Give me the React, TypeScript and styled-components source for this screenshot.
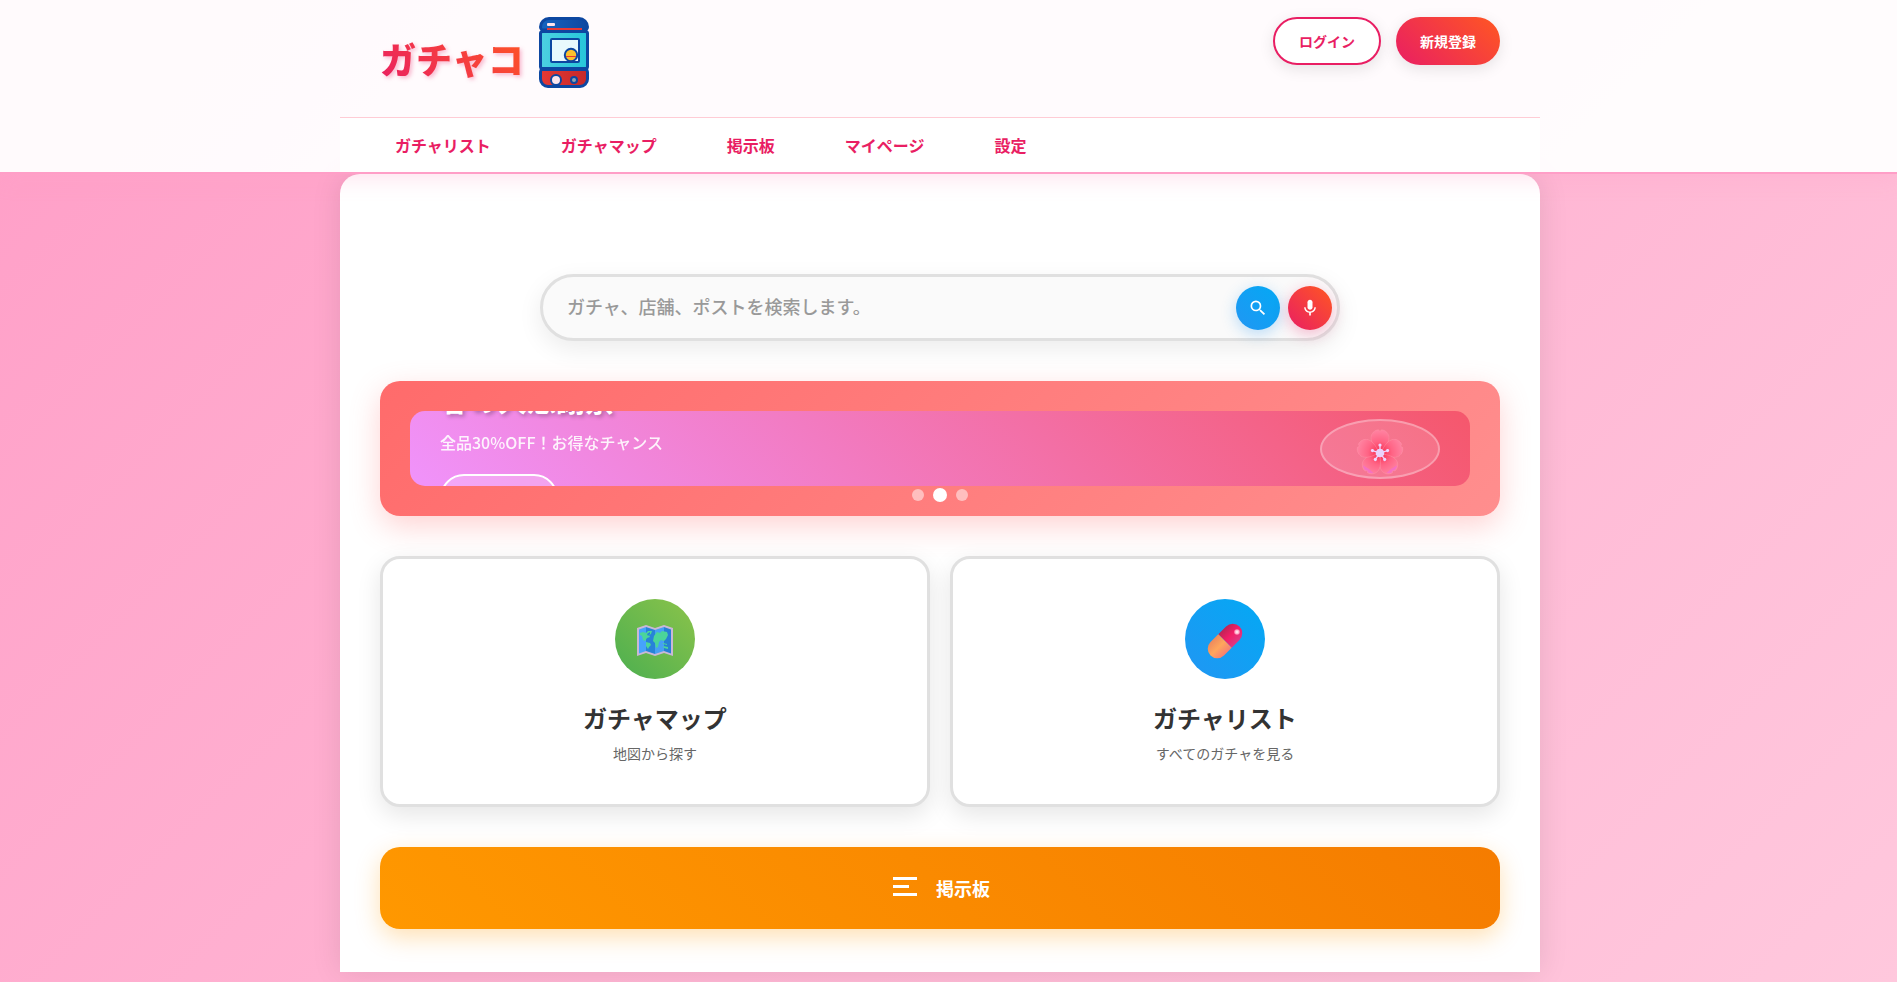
import React from "react";
import styled, { createGlobalStyle, css } from "styled-components";

const Global = createGlobalStyle`
  * { box-sizing: border-box; margin: 0; padding: 0; }
  html { background: linear-gradient(135deg, #ff9ec7 0%, #ffc8dd 100%); }
  body {
    font-family: "Noto Sans CJK JP", sans-serif;
    color: #333;
    line-height: 24px;
  }
  button, input { font-family: inherit; }
`;

const Page = styled.div`
  min-height: 100vh;
  overflow-x: hidden;
  padding-bottom: 10px;
`;

const Header = styled.header`
  position: relative;
  z-index: 2;
  padding-right: 17px;
  background: rgba(255, 255, 255, 0.95);
  border-bottom: 2px solid #ff9ec7;
  box-shadow: 0 4px 20px rgba(255, 158, 199, 0.3);
`;

const HeaderTop = styled.div`
  display: flex;
  justify-content: space-between;
  align-items: flex-start;
  max-width: 1200px;
  height: 117px;
  margin: 0 auto;
  padding: 17px 40px;
`;

const Logo = styled.a`
  display: flex;
  gap: 15px;
  text-decoration: none;
`;

const LogoText = styled.span`
  margin-top: 12px;
  font-size: 36px;
  line-height: 58px;
  font-weight: 900;
  background: linear-gradient(45deg, #e91e63, #ff5722);
  background-clip: text;
  color: transparent;
  filter: drop-shadow(2px 2px 2px rgba(233, 30, 99, 0.3));
`;

const Auth = styled.div`
  display: flex;
  gap: 15px;
`;

const AuthButton = styled.button<{ $filled?: boolean }>`
  height: 48px;
  padding: 0 24px;
  border: ${(p) => (p.$filled ? "0" : "2px solid #e91e63")};
  border-radius: 25px;
  font-size: 14px;
  font-weight: 700;
  color: ${(p) => (p.$filled ? "#fff" : "#e91e63")};
  background: ${(p) => (p.$filled ? "linear-gradient(45deg, #e91e63, #ff5722)" : "#fff")};
  box-shadow: 0 4px 15px rgba(0, 0, 0, 0.1);
`;

const Nav = styled.nav`
  display: flex;
  gap: 20px;
  max-width: 1200px;
  margin: 0 auto;
  padding: 5px 30px;
  background: #fff;
  border-top: 1px solid #ffccd5;
`;

const NavLink = styled.a`
  padding: 10px 25px;
  font-size: 16px;
  line-height: 24px;
  font-weight: 700;
  color: #e91e63;
  text-decoration: none;
`;

const Gutter = styled.div`
  padding-right: 17px;
`;

const Main = styled.main`
  display: flex;
  flex-direction: column;
  max-width: 1200px;
  margin: 0 auto;
  padding: 100px 40px 43px;
  background: #fff;
  border-radius: 20px 20px 0 0;
  box-shadow: 0 0 30px rgba(0, 0, 0, 0.1);
`;

const Search = styled.form`
  display: flex;
  align-items: center;
  gap: 8px;
  width: 100%;
  max-width: 800px;
  height: 67px;
  margin: 0 auto 40px;
  padding: 0 5px 0 24px;
  background: #fafafa;
  border: 3px solid #e0e0e0;
  border-radius: 34px;
  box-shadow: 0 8px 25px rgba(0, 0, 0, 0.08);
`;

const SearchInput = styled.input`
  flex: 1;
  min-width: 0;
  height: 40px;
  padding-bottom: 3px;
  border: 0;
  background: transparent;
  font-size: 18px;
  font-weight: 500;
  color: #333;
  outline: none;
  &::placeholder { color: #999; opacity: 1; }
`;

const RoundButton = styled.button<{ $voice?: boolean }>`
  display: grid;
  place-items: center;
  width: 44px;
  height: 44px;
  border: 0;
  border-radius: 50%;
  ${(p) =>
    p.$voice
      ? css`
          background: linear-gradient(45deg, #e91e63, #ff5722);
          box-shadow: 0 4px 15px rgba(233, 30, 99, 0.3);
        `
      : css`
          background: linear-gradient(45deg, #2196f3, #03a9f4);
          box-shadow: 0 4px 15px rgba(33, 150, 243, 0.3);
        `}
`;

const Carousel = styled.section`
  position: relative;
  height: 135px;
  margin-bottom: 40px;
  padding: 30px;
  border-radius: 20px;
  background: linear-gradient(135deg, #ff6b6b, #ff8e8e);
  box-shadow: 0 10px 30px rgba(255, 107, 107, 0.3);
`;

const Slide = styled.div`
  display: flex;
  align-items: center;
  justify-content: space-between;
  height: 75px;
  padding: 0 30px;
  overflow: hidden;
  border-radius: 15px;
  background: linear-gradient(45deg, #f093fb, #f5576c);
  color: #fff;
`;

const SlideText = styled.div`
  display: flex;
  flex-direction: column;
  align-items: flex-start;
`;

const SlideTitle = styled.h2`
  margin-bottom: 8px;
  font-size: 29px;
  line-height: 46px;
  font-weight: 700;
  text-shadow: 2px 2px 4px rgba(0, 0, 0, 0.3);
`;

const SlideLead = styled.p`
  margin-bottom: 20px;
  font-size: 16px;
  line-height: 24px;
  font-weight: 500;
  opacity: 0.9;
`;

const SlideButton = styled.button`
  height: 48px;
  padding: 0 22px;
  border: 2px solid #fff;
  border-radius: 25px;
  background: rgba(255, 255, 255, 0.2);
  color: #fff;
  font-size: 14px;
  font-weight: 700;
`;

const SlideArt = styled.div`
  display: grid;
  place-items: center;
  width: 120px;
  height: 60px;
  padding-top: 8px;
  border: 2px solid rgba(255, 255, 255, 0.3);
  border-radius: 50%;
  background: rgba(255, 255, 255, 0.15);
`;

const Dots = styled.div`
  position: absolute;
  bottom: 14px;
  left: 0;
  right: 0;
  display: flex;
  justify-content: center;
  align-items: center;
  gap: 9px;
`;

const Dot = styled.button<{ $active?: boolean }>`
  width: ${(p) => (p.$active ? 14 : 12)}px;
  height: ${(p) => (p.$active ? 14 : 12)}px;
  border: 0;
  border-radius: 50%;
  background: ${(p) => (p.$active ? "#fff" : "rgba(255, 255, 255, 0.5)")};
`;

const Cards = styled.div`
  display: grid;
  grid-template-columns: 1fr 1fr;
  gap: 20px;
  margin-bottom: 40px;
`;

const Card = styled.a`
  display: flex;
  flex-direction: column;
  align-items: center;
  height: 251px;
  padding: 40px 27px;
  border: 3px solid #e0e0e0;
  border-radius: 20px;
  background: #fff;
  box-shadow: 0 8px 25px rgba(0, 0, 0, 0.1);
  text-decoration: none;
`;

const CardIcon = styled.div<{ $from: string; $to: string }>`
  display: grid;
  place-items: center;
  width: 80px;
  height: 80px;
  padding-top: 4px;
  margin-bottom: 20px;
  border-radius: 50%;
  background: linear-gradient(45deg, ${(p) => p.$from}, ${(p) => p.$to});
`;

const CardTitle = styled.h3`
  margin-bottom: 5px;
  font-size: 24px;
  line-height: 38px;
  font-weight: 700;
  color: #333;
`;

const CardText = styled.p`
  font-size: 14px;
  line-height: 22px;
  color: #666;
`;

const Board = styled.button`
  display: flex;
  align-items: center;
  justify-content: center;
  gap: 16px;
  height: 82px;
  border: 0;
  border-radius: 20px;
  background: linear-gradient(45deg, #ff9800, #f57c00);
  box-shadow: 0 8px 25px rgba(255, 152, 0, 0.3);
  color: #fff;
  font-size: 18px;
  font-weight: 700;
`;

const GachaMachine = () => (
  <svg width="50" height="71" viewBox="0 0 50 71" aria-hidden="true">
    <defs>
      <linearGradient id="lid"><stop stopColor="#1565c0" /><stop offset="1" stopColor="#0d47a1" /></linearGradient>
      <linearGradient id="tank"><stop stopColor="#4dd0e1" /><stop offset="1" stopColor="#26c6da" /></linearGradient>
      <linearGradient id="base"><stop stopColor="#e53935" /><stop offset="1" stopColor="#c62828" /></linearGradient>
    </defs>
    <path d="M3 13Q1.500 12 1.500 10a8.500 8.500 0 0 1 8.500-8.500h30a8.500 8.500 0 0 1 8.500 8.500Q48.500 12 47 13z" fill="url(#lid)" stroke="#0d47a1" strokeWidth="3" strokeLinejoin="round" />
    <rect x="1.500" y="14.500" width="47" height="37" rx="2" fill="url(#tank)" stroke="#0d47a1" strokeWidth="3" />
    <path d="M3 52.500h44Q48.500 53 48.500 55v7a7.500 7.500 0 0 1-7.500 7.500H9A7.500 7.500 0 0 1 1.500 62v-7Q1.500 53 3 52.500z" fill="url(#base)" stroke="#0d47a1" strokeWidth="3" strokeLinejoin="round" />
    <rect x="8" y="6" width="8" height="3" rx="1" fill="#fce4ec" />
    <rect x="8" y="11" width="35" height="2" fill="#e53935" />
    <rect x="12" y="22" width="28" height="23" rx="1" fill="#e8f9fd" stroke="#0d47a1" strokeWidth="2" />
    <circle cx="32" cy="38" r="6.200" fill="#fbc02d" stroke="#0d47a1" strokeWidth="2" />
    <path d="M27 39.500h10" stroke="#e53935" strokeWidth="1" />
    <circle cx="17" cy="63" r="5" fill="#fce4ec" stroke="#0d47a1" strokeWidth="2" />
    <circle cx="35" cy="63" r="3" fill="#90a4ae" stroke="#0d47a1" strokeWidth="2" />
  </svg>
);

const SearchIcon = () => (
  <svg width="20" height="20" viewBox="0 0 24 24" fill="#fff" aria-hidden="true">
    <path d="M15.500 14h-.79l-.28-.27A6.471 6.471 0 0 0 16 9.500 6.500 6.500 0 1 0 9.500 16c1.610 0 3.090-.59 4.230-1.570l.27.28v.79l5 4.990L20.490 19l-4.990-5zm-6 0C7.010 14 5 11.990 5 9.500S7.010 5 9.500 5 14 7.010 14 9.500 11.990 14 9.500 14z" />
  </svg>
);

const MicIcon = () => (
  <svg width="20" height="20" viewBox="0 0 24 24" fill="#fff" aria-hidden="true">
    <path d="M12 14c1.660 0 3-1.340 3-3V5c0-1.660-1.340-3-3-3S9 3.340 9 5v6c0 1.660 1.340 3 3 3z" />
    <path d="M17.300 11c0 3-2.540 5.100-5.300 5.100S6.700 14 6.700 11H5c0 3.410 2.720 6.230 6 6.720V21h2v-3.280c3.280-.48 6-3.300 6-6.720z" />
  </svg>
);

const Blossom = () => (
  <svg width="48" height="48" viewBox="-24 -24 48 48" aria-hidden="true">
    <defs>
      <radialGradient id="petals" gradientUnits="userSpaceOnUse" cx="0" cy="0" r="24">
        <stop offset=".15" stopColor="#f93a5c" />
        <stop offset=".5" stopColor="#ff6485" />
        <stop offset="1" stopColor="#ff86a4" />
      </radialGradient>
      <linearGradient id="petalGlow" gradientUnits="userSpaceOnUse" x1="0" y1="10" x2="0" y2="23">
        <stop stopColor="#f36bd0" stopOpacity="0" />
        <stop offset="1" stopColor="#f06bd8" stopOpacity=".9" />
      </linearGradient>
    </defs>
    {[0, 72, 144, 216, 288].map((a) => (
      <path
        key={a}
        transform={`rotate(${a})`}
        d="M0-1C-3-4-9-9-9-15.500c0-4 3.500-7.500 7.500-7.800L0-21.500l1.500-1.800c4 .3 7.500 3.800 7.500 7.800C9-9 3-4 0-1z"
        fill="url(#petals)"
        stroke="#ff9aab"
        strokeOpacity=".6"
        strokeWidth=".6"
      />
    ))}
    {[144, 216].map((a) => (
      <g key={a} transform={`rotate(${a})`}>
        <path
          d="M0-1C-3-4-9-9-9-15.500c0-4 3.500-7.500 7.500-7.800L0-21.500l1.500-1.800c4 .3 7.500 3.800 7.500 7.800C9-9 3-4 0-1z"
          fill="url(#petalGlow)"
          fillOpacity=".8"
        />
        <path d="M-6.500-20Q-4-23-1.500-22.800L0-21.500l1.500-1.300Q4-23 6.500-20Q0-19-6.500-20z" fill="#f06bd8" fillOpacity=".6" />
      </g>
    ))}
    {[0, 72, 144, 216, 288].map((a) => (
      <g key={a} transform={`rotate(${a})`}>
        <path d="M0 0v-8" stroke="#f0d5ff" strokeWidth="1.300" />
        <circle cy="-8" r="1.600" fill="#f0d5ff" />
      </g>
    ))}
    <circle r="4.300" fill="#ead2fc" />
  </svg>
);

const MapArt = () => (
  <svg width="36" height="34" viewBox="0 0 36 34" aria-hidden="true">
    <path d="M0 4l9-3 9 3 9-3 9 3v28l-9-3-9 3-9-3-9 3z" fill="#c9b8d6" />
    <path d="M2 5.500l7-2.500v24l-7 2.500z" fill="#46a3fb" />
    <path d="M9 3l9 3v24l-9-3z" fill="#2783d8" />
    <path d="M18 6l9-3v24l-9 3z" fill="#46a0f4" />
    <path d="M27 3l7 2.500v24L27 27z" fill="#2680d4" />
    <path d="M3 9l3-1 3 1 2-2 4 0-1 3-2 1 1 2-3 1-2 3-2-1-1-4-2-1zM9 18l4 1 1 2-2 2-1 2-2-3zM16 17l1-5 3-4 3 1 2-2 5 1 1 3-2 4-2 2-3-1-2 2-1 5-2 1-1-5zM26 19l4 1v1l-4-1zM26 22l5 1v2l-4-1z" fill="#4bd59a" />
    <path d="M10 10l3-2v2l-2 2z" fill="#2783d8" />
  </svg>
);

const CapsuleArt = () => (
  <svg width="36" height="36" viewBox="0 0 36 36" aria-hidden="true">
    <defs>
      <linearGradient id="pillTop"><stop stopColor="#bd2455" /><stop offset=".5" stopColor="#f31d67" /><stop offset="1" stopColor="#dd3883" /></linearGradient>
      <linearGradient id="pillBottom"><stop stopColor="#ee8a5d" /><stop offset=".5" stopColor="#ffa65c" /><stop offset="1" stopColor="#f67f72" /></linearGradient>
      <radialGradient id="shine"><stop stopColor="#fff" /><stop offset="1" stopColor="#ff83ae" /></radialGradient>
    </defs>
    <g transform="rotate(45 18 18)">
      <path d="M8.500 18V7a9.500 9.500 0 0 1 19 0v11z" fill="url(#pillTop)" />
      <path d="M8.500 18v11a9.500 9.500 0 0 0 19 0V18z" fill="url(#pillBottom)" />
    </g>
    <circle cx="30" cy="9" r="2.800" fill="url(#shine)" />
  </svg>
);

const BoardIcon = () => (
  <svg width="30" height="30" viewBox="0 0 30 30" fill="#fff" aria-hidden="true">
    <path d="M3 4h24v3H3zM3 12h16v3H3zM3 20h24v3H3z" />
  </svg>
);

const links = ["ガチャリスト", "ガチャマップ", "掲示板", "マイページ", "設定"];

export default function App() {
  return (
    <Page lang="ja">
      <Global />
      <Header>
        <HeaderTop>
          <Logo href="#">
            <LogoText>ガチャコ</LogoText>
            <GachaMachine />
          </Logo>
          <Auth>
            <AuthButton>ログイン</AuthButton>
            <AuthButton $filled>新規登録</AuthButton>
          </Auth>
        </HeaderTop>
        <Nav>
          {links.map((l) => (
            <NavLink key={l} href="#">{l}</NavLink>
          ))}
        </Nav>
      </Header>
      <Gutter>
        <Main>
          <Search onSubmit={(e) => e.preventDefault()}>
            <SearchInput aria-label="検索" placeholder="ガチャ、店舗、ポストを検索します。" />
            <RoundButton type="submit" aria-label="検索"><SearchIcon /></RoundButton>
            <RoundButton type="button" $voice aria-label="音声検索"><MicIcon /></RoundButton>
          </Search>
          <Carousel>
            <Slide>
              <SlideText>
                <SlideTitle>春の大感謝祭</SlideTitle>
                <SlideLead>全品30%OFF！お得なチャンス</SlideLead>
                <SlideButton>詳細を見る</SlideButton>
              </SlideText>
              <SlideArt><Blossom /></SlideArt>
            </Slide>
            <Dots>
              <Dot aria-label="1" />
              <Dot $active aria-label="2" />
              <Dot aria-label="3" />
            </Dots>
          </Carousel>
          <Cards>
            <Card href="#">
              <CardIcon $from="#4caf50" $to="#8bc34a"><MapArt /></CardIcon>
              <CardTitle>ガチャマップ</CardTitle>
              <CardText>地図から探す</CardText>
            </Card>
            <Card href="#">
              <CardIcon $from="#2196f3" $to="#03a9f4"><CapsuleArt /></CardIcon>
              <CardTitle>ガチャリスト</CardTitle>
              <CardText>すべてのガチャを見る</CardText>
            </Card>
          </Cards>
          <Board><BoardIcon />掲示板</Board>
        </Main>
      </Gutter>
    </Page>
  );
}
